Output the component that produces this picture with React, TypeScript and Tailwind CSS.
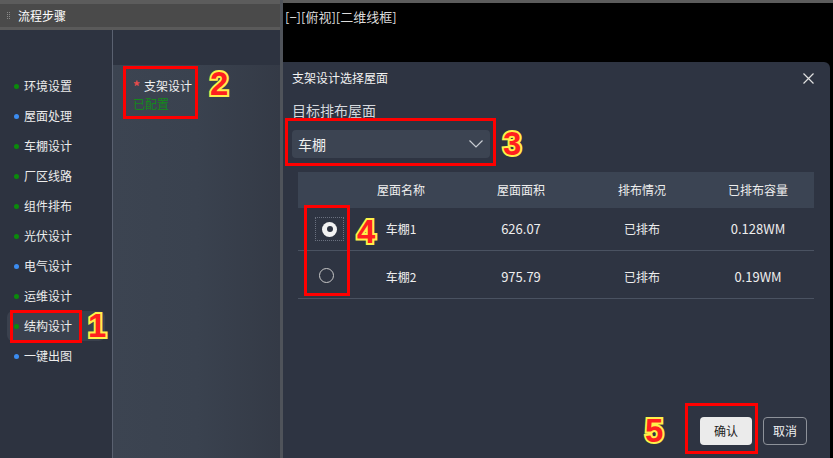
import React from "react";

const FONT = "font-['Noto_Sans_CJK_SC','Noto_Sans',sans-serif]";

function Ann({ n, x, y }: { n: string; x: string; y: string }) {
  return (
    <div
      className={`absolute ${x} ${y} font-['Liberation_Sans',Arial,sans-serif] font-bold text-[33px] leading-none text-[#ff1f1f] [-webkit-text-stroke:4px_#fff04a] [paint-order:stroke_fill]`}
    >
      {n}
    </div>
  );
}

function Box({ cls }: { cls: string }) {
  return <div className={`absolute border-[3px] border-[#ff0000] ${cls}`} />;
}

const navItems: { label: string; color: string; active?: boolean }[] = [
  { label: "环境设置", color: "bg-[#0b8a0b]" },
  { label: "屋面处理", color: "bg-[#3b8cf0]" },
  { label: "车棚设计", color: "bg-[#0b8a0b]" },
  { label: "厂区线路", color: "bg-[#0b8a0b]" },
  { label: "组件排布", color: "bg-[#0b8a0b]" },
  { label: "光伏设计", color: "bg-[#0b8a0b]" },
  { label: "电气设计", color: "bg-[#3b8cf0]" },
  { label: "运维设计", color: "bg-[#0b8a0b]" },
  { label: "结构设计", color: "bg-[#0b8a0b]", active: true },
  { label: "一键出图", color: "bg-[#3b8cf0]" },
];

export default function App() {
  return (
    <div className={`relative w-[833px] h-[458px] overflow-hidden bg-black flex ${FONT}`}>
      {/* Left panel */}
      <div className="w-[280px] h-full flex flex-col bg-[#2d3340]">
        <div className="h-[4px] bg-[#5c5c5c]" />
        <div className="h-[23px] bg-[#4a4a4a] flex items-center pl-[7px]">
          <div className="grid grid-cols-2 gap-[1px] w-[3px] mr-[8px]">
            {Array.from({ length: 8 }).map((_, i) => (
              <div key={i} className="w-[1px] h-[1px] bg-[#8a8a8a]" />
            ))}
          </div>
          <span className="text-[12px] leading-none text-white">流程步骤</span>
        </div>
        <div className="h-[3px] bg-[#5a5a5a]" />
        <div className="flex-1 flex">
          {/* nav */}
          <div className="w-[112px] pt-[41px] flex flex-col">
            {navItems.map((it) => (
              <div
                key={it.label}
                className={`h-[30px] ml-[7px] w-[98px] pl-[7px] flex items-center gap-[5px] rounded-md ${
                  it.active ? "bg-[#3a414e]" : ""
                }`}
              >
                <span className={`w-[5px] h-[5px] rounded-full ${it.color}`} />
                <span className="text-[12px] leading-none text-[#ececec]">{it.label}</span>
              </div>
            ))}
          </div>
          <div className="w-[1px] bg-[#5a6170]" />
          {/* col2 */}
          <div className="flex-1 flex flex-col">
            <div className="h-[35px]" />
            <div className="flex-1 bg-gradient-to-r from-[#3c4451] via-[#3a424f] to-[#343a46] pl-[20px] pt-[13px]">
              <div className="flex items-center h-[16px]">
                <span className="text-[#e84c4c] text-[14px] font-bold leading-[10px] h-[10px] mr-[4px] overflow-visible">*</span>
                <span className="text-[12px] leading-none text-[#f0f0f0]">支架设计</span>
              </div>
              <div className="mt-[3px] text-[12px] leading-[14px] text-[#138a1a]">已配置</div>
            </div>
          </div>
        </div>
      </div>

      {/* separator */}
      <div className="w-[3px] h-full bg-[#4f535a]" />

      {/* Right area */}
      <div className="flex-1 h-full flex flex-col">
        <div className="h-[3px] bg-[#5c5c5c]" />
        <div className="h-[59px] pt-[6px] pl-[2px] text-[13px] leading-[16px] text-[#dcdcdc]">
          [−][俯视][二维线框]
        </div>
        <div className="flex-1 flex">
          <div className="w-[547px] h-full bg-[#2e3442] rounded-tr-md flex flex-col pt-[8px]">
            <div className="h-[16px] flex items-center justify-between pl-[9px] pr-[16px]">
              <span className="text-[12px] leading-none text-[#f2f2f2]">支架设计选择屋面</span>
              <svg width="11" height="11" viewBox="0 0 11 11" className="mt-[1px]">
                <path d="M0.5 0.5 L10.5 10.5 M10.5 0.5 L0.5 10.5" stroke="#e0e0e0" strokeWidth="1.2" fill="none" />
              </svg>
            </div>
            <div className="mt-[14px] pl-[9px] text-[14px] leading-[20px] text-[#d6d9de]">目标排布屋面</div>
            <div className="mt-[10px] ml-[9px] w-[198px] h-[28px] rounded bg-[#3c4452] flex items-center justify-between pl-[6px] pr-[7px]">
              <span className="text-[14px] leading-none text-[#eeeeee]">车棚</span>
              <svg width="14" height="8" viewBox="0 0 14 8">
                <polyline points="0.5,0.5 7,7 13.5,0.5" stroke="#c8ccd2" strokeWidth="1.2" fill="none" />
              </svg>
            </div>

            {/* table */}
            <div className="mt-[14px] ml-[15px] w-[516px] text-[12px] text-[#eeeeee]">
              <div className="h-[36px] bg-[#3b4453] flex items-center">
                <div className="w-[44px]" />
                <div className="w-[118px] text-center">屋面名称</div>
                <div className="w-[122px] text-center">屋面面积</div>
                <div className="w-[120px] text-center">排布情况</div>
                <div className="w-[112px] text-center">已排布容量</div>
              </div>
              <div className="h-[43px] border-b border-[#4a5261] flex items-center">
                <div className="w-[44px] h-full relative">
                  <div className="absolute left-[17px] top-[9px] w-[29px] h-[24px] border-[1.5px] border-dotted border-[#6b7180] flex items-center justify-center">
                    <div className="w-[15px] h-[15px] rounded-full bg-[#f2f2f2] flex items-center justify-center">
                      <div className="w-[6px] h-[6px] rounded-full bg-[#2e3442]" />
                    </div>
                  </div>
                </div>
                <div className="w-[118px] text-center">车棚1</div>
                <div className="w-[122px] text-center text-[13px]">626.07</div>
                <div className="w-[120px] text-center">已排布</div>
                <div className="w-[112px] text-center text-[13px]">0.128WM</div>
              </div>
              <div className="h-[48px] border-b border-[#4a5261] flex items-center pt-[5px]">
                <div className="w-[44px] h-full relative">
                  <div className="absolute left-[21px] top-[12px] w-[15px] h-[15px] rounded-full border border-[#c8c8c8]" />
                </div>
                <div className="w-[118px] text-center">车棚2</div>
                <div className="w-[122px] text-center text-[13px]">975.79</div>
                <div className="w-[120px] text-center">已排布</div>
                <div className="w-[112px] text-center text-[13px]">0.19WM</div>
              </div>
            </div>

            <div className="mt-auto pb-[13px] pr-[23px] flex justify-end gap-[11px]">
              <div className="w-[52px] h-[28px] rounded bg-[#ebebeb] flex items-center justify-center text-[12px] text-[#222]">
                确认
              </div>
              <div className="w-[44px] h-[28px] rounded border border-[#8d9199] flex items-center justify-center text-[12px] text-[#f0f0f0]">
                取消
              </div>
            </div>
          </div>
        </div>
      </div>

      {/* annotations */}
      <Box cls="left-[10px] top-[310px] w-[72px] h-[33px]" />
      <Box cls="left-[123px] top-[66px] w-[75px] h-[53px]" />
      <Box cls="left-[285px] top-[118px] w-[211px] h-[48px]" />
      <Box cls="left-[304px] top-[205px] w-[46px] h-[91px]" />
      <Box cls="left-[685px] top-[403px] w-[73px] h-[51px]" />
      <Ann n="1" x="left-[88px]" y="top-[309px]" />
      <Ann n="2" x="left-[210px]" y="top-[67px]" />
      <Ann n="3" x="left-[503px]" y="top-[127px]" />
      <Ann n="4" x="left-[357px]" y="top-[215px]" />
      <Ann n="5" x="left-[645px]" y="top-[414px]" />
    </div>
  );
}
